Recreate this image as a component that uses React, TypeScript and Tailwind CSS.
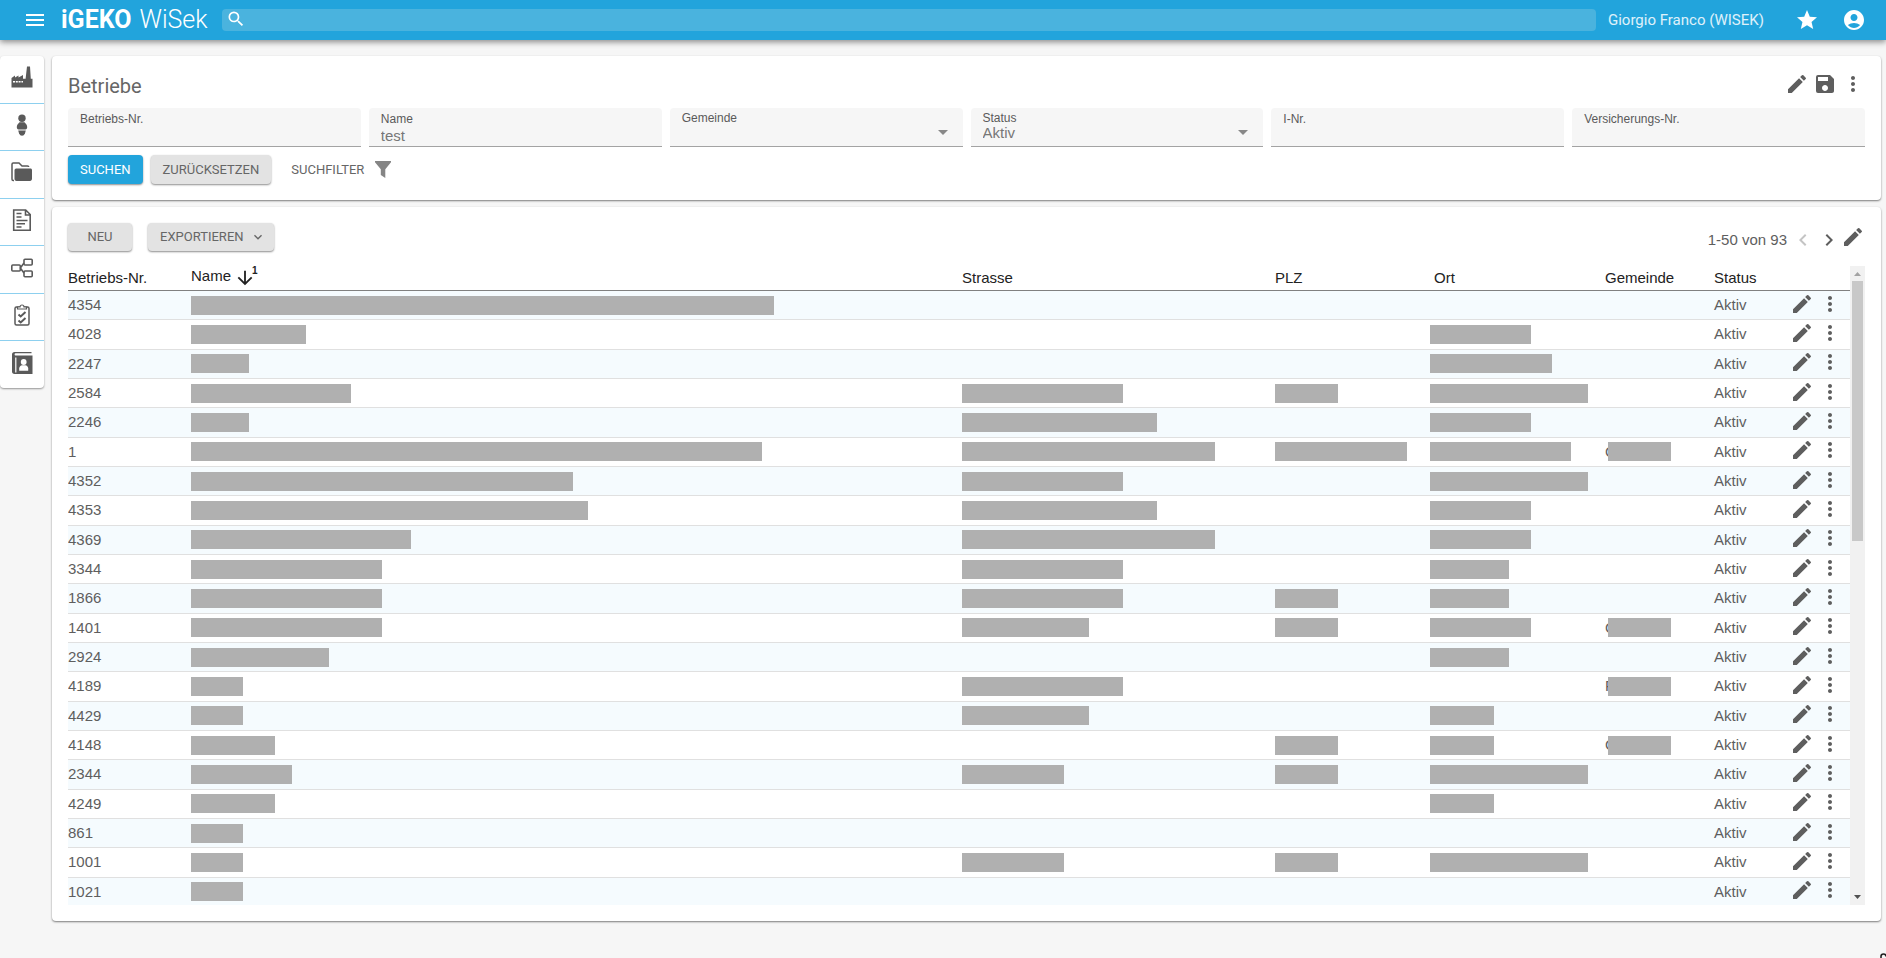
import type { ReactNode } from "react";
import {
  MdAccountCircle,
  MdArrowDownward,
  MdArrowDropDown,
  MdChevronLeft,
  MdChevronRight,
  MdEdit,
  MdExpandMore,
  MdMenu,
  MdMoreVert,
  MdSave,
  MdSearch,
  MdStar,
} from "react-icons/md";

type Row = {
  nr: string;
  name: number;
  strasse?: number;
  plz?: number;
  ort?: number;
  gemeinde?: string;
};

const rows: Row[] = [
  { nr: "4354", name: 583 },
  { nr: "4028", name: 115, ort: 101 },
  { nr: "2247", name: 58, ort: 122 },
  { nr: "2584", name: 160, strasse: 161, plz: 63, ort: 158 },
  { nr: "2246", name: 58, strasse: 195, ort: 101 },
  { nr: "1", name: 571, strasse: 253, plz: 132, ort: 141, gemeinde: "G" },
  { nr: "4352", name: 382, strasse: 161, ort: 158 },
  { nr: "4353", name: 397, strasse: 195, ort: 101 },
  { nr: "4369", name: 220, strasse: 253, ort: 101 },
  { nr: "3344", name: 191, strasse: 161, ort: 79 },
  { nr: "1866", name: 191, strasse: 161, plz: 63, ort: 79 },
  { nr: "1401", name: 191, strasse: 127, plz: 63, ort: 101, gemeinde: "G" },
  { nr: "2924", name: 138, ort: 79 },
  { nr: "4189", name: 52, strasse: 161, gemeinde: "F" },
  { nr: "4429", name: 52, strasse: 127, ort: 64 },
  { nr: "4148", name: 84, plz: 63, ort: 64, gemeinde: "G" },
  { nr: "2344", name: 101, strasse: 102, plz: 63, ort: 158 },
  { nr: "4249", name: 84, ort: 64 },
  { nr: "861", name: 52 },
  { nr: "1001", name: 52, strasse: 102, plz: 63, ort: 158 },
  { nr: "1021", name: 52 },
];

function Redacted({ width }: { width?: number }) {
  if (!width) return null;
  return <span className="relative block h-[19px] shrink-0 bg-[#b0b0b0]" style={{ width }} />;
}

const navItems: { label: string; icon: ReactNode }[] = [
  {
    label: "Betriebe",
    icon: (
      <>
        <path d="M.5 21.500V12L4 9.500V11.500L7.500 9.500V11.500L12 9V12.800H14.600L16 .5h3L19.800 12.800H21.500V21.500z" fill="currentColor" />
        <path d="M2 15.800h10" stroke="#fff" strokeWidth="1.400" strokeDasharray="2 .8" />
      </>
    ),
  },
  {
    label: "Personen",
    icon: (
      <g fill="currentColor">
        <circle cx="11" cy="4.200" r="3.700" />
        <path d="M8.500 8.300h5c1.600 1.500 2.700 3 2.700 5 0 1.200-.6 2-1.700 2.200h-7c-1.100-.2-1.700-1-1.700-2.200 0-2 1.100-3.500 2.700-5z" />
        <path d="M7.200 16.500h7.600l-.8 2.800c-.6 1.700-1.800 2.500-3 2.500s-2.400-.8-3-2.500z" />
      </g>
    ),
  },
  {
    label: "Dossiers",
    icon: (
      <>
        <path d="M3 19.500H2.200c-.7 0-1.200-.5-1.200-1.200V3.200C1 2.500 1.500 2 2.200 2H8l3 3h5.500c.7 0 1.200.4 1.200 1" fill="none" stroke="currentColor" strokeWidth="1.500" />
        <path d="M5.500 7.500h14c.8 0 1.500.7 1.500 1.500v8.500c0 1.400-.8 2.500-2 2.500H5.500c-1 0-2-1-2-2V9c0-.8 1.200-1.500 2-1.500z" fill="currentColor" />
      </>
    ),
  },
  {
    label: "Dokumente",
    icon: (
      <>
        <path d="M2.700 1h12l4.500 4.500v15.700H2.700z M14.500 1.500v4.500h4.500" fill="none" stroke="currentColor" strokeWidth="1.600" />
        <path d="M5.500 4.500h5M5.500 8h5M5.500 11.500h11M5.500 14.800h8.500M5.500 18h5" stroke="currentColor" strokeWidth="1.500" />
      </>
    ),
  },
  {
    label: "Prozesse",
    icon: (
      <g fill="none" stroke="currentColor" strokeWidth="1.600">
        <rect x=".8" y="8" width="8.500" height="6" rx="1" />
        <rect x="13" y="2.200" width="8.200" height="5.800" rx="1" />
        <rect x="13" y="14" width="8.200" height="5.800" rx="1" />
        <path d="M9.300 11L13 6M9.300 11l3.700 5" />
      </g>
    ),
  },
  {
    label: "Aufgaben",
    icon: (
      <>
        <rect x="4" y="3" width="14" height="18" rx="1.500" fill="none" stroke="currentColor" strokeWidth="1.500" />
        <path d="M6.500 5V3H9a2 2 0 0 1 4 0h2.500v2z" fill="#fff" stroke="currentColor" strokeWidth="1.200" />
        <path d="M7.500 10.500l2.200 2L14.500 8M7.500 16.500l2.200 2 4.800-4.500" fill="none" stroke="currentColor" strokeWidth="2" />
      </>
    ),
  },
  {
    label: "Adressbuch",
    icon: (
      <>
        <path d="M3.500 0h17v1.200H4.500c-1.200 0-1.200 2.300 0 2.300h17V22h-18c-1.600 0-2.500-1-2.500-2.500V2.500C1 1 2 0 3.500 0z" fill="currentColor" />
        <path d="M4.800 5.500V20.500" stroke="#fff" strokeWidth="1.200" />
        <circle cx="12.700" cy="10" r="2.900" fill="#fff" />
        <path d="M8.200 18.800v-2.300c0-2 1.500-3 2.800-3.200h3.400c1.300.2 2.800 1.200 2.800 3.200v2.300z" fill="#fff" />
      </>
    ),
  },
];

function TextField({ id, label, value }: { id: string; label: string; value?: string }) {
  return (
    <div className="flex h-[39px] flex-col rounded-t border-b border-[#a3a3a3] bg-[#f6f6f6] px-3 pt-[3px]">
      <label htmlFor={id} className="h-4 text-xs leading-4 text-[#5a5a5a]">
        {label}
      </label>
      <input id={id} defaultValue={value} className="h-[18px] w-full bg-transparent text-[15px] leading-[18px] text-[#777] outline-none" />
    </div>
  );
}

function SelectField({ id, label, options }: { id: string; label: string; options: string[] }) {
  return (
    <div className="relative flex h-[39px] flex-col rounded-t border-b border-[#a3a3a3] bg-[#f6f6f6] px-3 pt-[2px]">
      <label htmlFor={id} className="h-[13px] text-xs leading-4 text-[#5a5a5a]">
        {label}
      </label>
      <select id={id} className="h-5 w-full appearance-none bg-transparent text-[15px] leading-5 text-[#777] outline-none">
        {options.map((o) => (
          <option key={o}>{o}</option>
        ))}
      </select>
      <MdArrowDropDown className="pointer-events-none absolute right-2 top-3 size-6 text-[#888]" />
    </div>
  );
}

const raised = "rounded bg-[#e3e3e3] font-['Roboto',sans-serif] text-[13px] text-[#666] shadow-[0_1px_2px_rgba(0,0,0,0.45)]";

export default function App() {
  return (
    <div className="min-h-screen overflow-hidden bg-[#f6f6f6] font-['Liberation_Sans',Arial,sans-serif] text-[15px] text-[#5e5e5e]">
      <header className="flex h-10 items-center bg-[#22a4dc] pl-[23px] pr-5 font-['Roboto',sans-serif] text-white shadow-[0_2px_6px_rgba(0,0,0,0.45)]">
        <button type="button" aria-label="Menü" className="mr-[14px]">
          <MdMenu className="size-6" />
        </button>
        <a href="#start" className="flex w-[161px] shrink-0 gap-2 text-[25px] leading-10">
          <span className="font-bold">iGEKO</span>
          <span className="font-light">WiSek</span>
        </a>
        <div className="flex h-[22px] flex-1 items-center rounded bg-[#4ab3de] pl-1">
          <label htmlFor="search" aria-label="Suche">
            <MdSearch className="mb-0.5 size-5" />
          </label>
          <input id="search" type="search" className="h-full flex-1 bg-transparent px-1 text-sm outline-none" />
        </div>
        <span className="w-[199px] pl-3 text-[15px] text-white/85">Giorgio Franco (WISEK)</span>
        <button type="button" aria-label="Favoriten" className="mr-[23px]">
          <MdStar className="size-6" />
        </button>
        <button type="button" aria-label="Konto">
          <MdAccountCircle className="size-6" />
        </button>
      </header>

      <div className="flex items-start gap-2 pr-[5px] pt-4">
        <nav className="flex h-[332px] w-11 shrink-0 flex-col divide-y divide-[#8dd0ef] rounded bg-white shadow-[0_1px_2px_rgba(0,0,0,0.4)]">
          {navItems.map((item) => (
            <a key={item.label} href={"#" + item.label} aria-label={item.label} className="flex flex-1 items-center justify-center pb-1 text-[#5a5a5a]">
              <svg width="22" height="22" viewBox="0 0 22 22">
                {item.icon}
              </svg>
            </a>
          ))}
        </nav>

        <main className="flex min-w-0 flex-1 flex-col gap-[7px]">
          <section className="rounded bg-white p-4 shadow-[0_1px_2px_rgba(0,0,0,0.5)]">
            <div className="mb-2 flex h-7 items-center justify-between">
              <h1 className="font-['Roboto',sans-serif] text-xl text-[#666]">Betriebe</h1>
              <div className="flex gap-1 pb-1">
                <button type="button" aria-label="Bearbeiten"><MdEdit className="size-6" /></button>
                <button type="button" aria-label="Speichern"><MdSave className="size-6" /></button>
                <button type="button" aria-label="Mehr"><MdMoreVert className="size-6" /></button>
              </div>
            </div>
            <form onSubmit={(e) => e.preventDefault()}>
              <div className="grid grid-cols-6 gap-2">
                <TextField id="betriebsnr" label="Betriebs-Nr." />
                <TextField id="name" label="Name" value="test" />
                <SelectField id="gemeinde" label="Gemeinde" options={[""]} />
                <SelectField id="status" label="Status" options={["Aktiv", "Inaktiv"]} />
                <TextField id="inr" label="I-Nr." />
                <TextField id="versnr" label="Versicherungs-Nr." />
              </div>
              <div className="mt-2 flex items-center">
                <button type="submit" className="mr-2 h-[29px] rounded bg-[#22a4dc] px-3 font-['Roboto',sans-serif] text-[13px] text-white shadow-[0_1px_2px_rgba(0,0,0,0.45)]">
                  SUCHEN
                </button>
                <button type="reset" className={raised + " mr-5 h-[29px] px-3"}>ZURÜCKSETZEN</button>
                <button type="button" className="flex items-center gap-[11px] font-['Roboto',sans-serif] text-[13px] text-[#666]">
                  SUCHFILTER
                  <svg width="16" height="17" viewBox="0 0 16 17">
                    <path d="M0 0h16v1.200L10.300 8.200V17L5.800 14V8.200L0 1.200z" fill="#858585" />
                  </svg>
                </button>
              </div>
            </form>
          </section>

          <section className="rounded bg-white p-4 shadow-[0_1px_2px_rgba(0,0,0,0.5)]">
            <div className="mb-[15px] flex h-7 items-center">
              <button type="button" className={raised + " mr-4 h-7 w-16"}>NEU</button>
              <button type="button" className={raised + " flex h-7 items-center gap-[6px] pl-3 pr-2"}>
                EXPORTIEREN
                <MdExpandMore className="size-4" />
              </button>
              <div className="ml-auto flex items-center">
                <span className="mr-1 pt-[6px]">1-50 von 93</span>
                <button type="button" aria-label="Vorherige Seite" disabled className="mr-0.5 pt-[6px] text-[#c4c4c4]"><MdChevronLeft className="size-6" /></button>
                <button type="button" aria-label="Nächste Seite" className="pt-[6px]"><MdChevronRight className="size-6" /></button>
                <button type="button" aria-label="Spalten bearbeiten"><MdEdit className="size-6" /></button>
              </div>
            </div>

            <div className="flex h-[639px] overflow-hidden">
              <div className="min-w-0 flex-1 overflow-hidden">
                <table className="h-[641px] w-full table-fixed border-collapse">
                  <colgroup>
                    <col className="w-[123px]" />
                    <col />
                    <col className="w-[313px]" />
                    <col className="w-[155px]" />
                    <col className="w-[175px]" />
                    <col className="w-[109px]" />
                    <col className="w-[76px]" />
                    <col className="w-[60px]" />
                  </colgroup>
                  <thead>
                    <tr className="h-6 border-b border-[#808080] text-left leading-6 text-[#222] [&>th]:p-0 [&>th]:font-normal">
                      <th>Betriebs-Nr.</th>
                      <th>
                        <button type="button" className="flex h-5 items-center pb-1">
                          Name
                          <MdArrowDownward className="ml-[3px] mt-1 size-[22px]" />
                          <sup className="-ml-1 text-[10px] font-bold leading-none">1</sup>
                        </button>
                      </th>
                      <th>Strasse</th>
                      <th>PLZ</th>
                      <th><span className="pl-1">Ort</span></th>
                      <th>Gemeinde</th>
                      <th>Status</th>
                      <th aria-label="Aktionen" />
                    </tr>
                  </thead>
                  <tbody>
                    {rows.map((r) => (
                      <tr key={r.nr} className="border-b border-[#e0e0e0] leading-5 odd:bg-[#f5fbfe] [&>td]:p-0">
                        <td>{r.nr}</td>
                        <td><Redacted width={r.name} /></td>
                        <td><Redacted width={r.strasse} /></td>
                        <td><Redacted width={r.plz} /></td>
                        <td><Redacted width={r.ort} /></td>
                        <td>
                          {r.gemeinde && (
                            <span className="flex items-center">
                              <span className="w-[3px]">{r.gemeinde}</span>
                              <Redacted width={63} />
                            </span>
                          )}
                        </td>
                        <td>Aktiv</td>
                        <td>
                          <span className="flex gap-1 pb-[3px]">
                            <button type="button" aria-label={"Bearbeiten " + r.nr}><MdEdit className="size-6" /></button>
                            <button type="button" aria-label={"Mehr " + r.nr}><MdMoreVert className="size-6" /></button>
                          </span>
                        </td>
                      </tr>
                    ))}
                  </tbody>
                </table>
              </div>
              <div aria-hidden="true" className="flex w-[15px] flex-col items-center bg-[#f1f1f1]">
                <svg width="15" height="15" viewBox="0 0 15 15"><path d="M4 10l3.500-4L11 10z" fill="#a3a3a3" /></svg>
                <div className="h-[260px] w-[11px] bg-[#c8c8c8]" />
                <svg width="15" height="15" viewBox="0 0 15 15" className="mt-auto"><path d="M4 5l3.500 4L11 5z" fill="#505050" /></svg>
              </div>
            </div>
          </section>
        </main>
      </div>

      <svg width="6" height="5" viewBox="0 0 6 5" className="fixed bottom-0 right-0" aria-hidden="true">
        <path d="M1 5V3.500C1 1.800 2 1 3.500 1S6 1.800 6 3.500" fill="none" stroke="#222" strokeWidth="1.600" />
      </svg>
    </div>
  );
}
